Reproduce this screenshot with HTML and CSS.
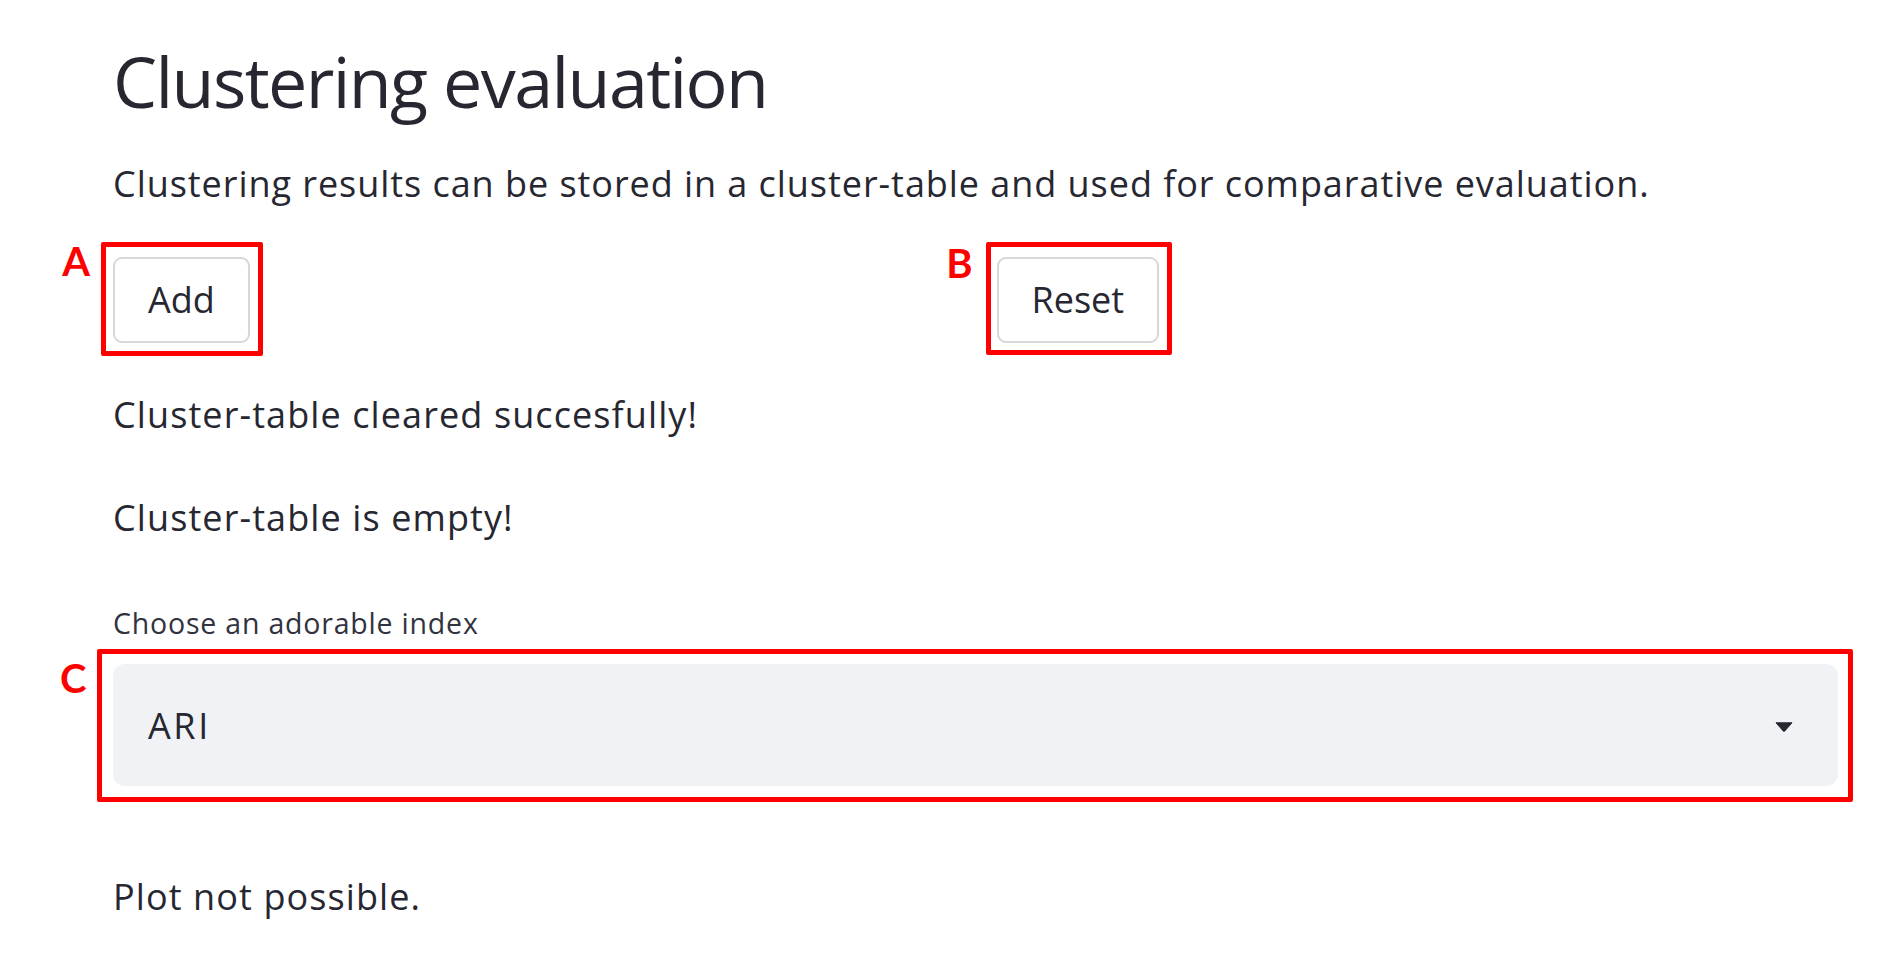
FILE: index.html
```html
<!DOCTYPE html>
<html lang="en">
<head>
<meta charset="utf-8">
<title>Clustering evaluation</title>
<link rel="stylesheet" href="styles.css">
</head>
<body>
<main class="page">
  <h1 class="title">Clustering evaluation</h1>
  <p class="text lead">Clustering results can be stored in a cluster-table and used for comparative evaluation.</p>

  <div class="cols">
    <div class="col">
      <div class="annot">
        <button class="btn" type="button">Add</button>
        <span class="mark mark-a"><span class="tag tag-a">A</span></span>
      </div>
    </div>
    <div class="col">
      <div class="annot">
        <button class="btn" type="button">Reset</button>
        <span class="mark mark-b"><span class="tag tag-b">B</span></span>
      </div>
    </div>
  </div>

  <p class="text msg msg-first">Cluster-table cleared succesfully!</p>
  <p class="text msg msg-second">Cluster-table is empty!</p>

  <label class="label">Choose an adorable index</label>
  <div class="annot annot-block">
    <div class="select">
      <span class="select-value">ARI</span>
      <svg class="select-arrow" width="18" height="10" viewBox="0 0 18 10" aria-hidden="true">
        <path d="M1 0.8 H17 L9.6 9.2 Q9 9.8 8.4 9.2 Z" fill="#262730" stroke="#262730" stroke-width="1" stroke-linejoin="round"/>
      </svg>
    </div>
    <span class="mark mark-c"><span class="tag tag-c">C</span></span>
  </div>

  <p class="text plot">Plot not possible.</p>
</main>
</body>
</html>
```

FILE: styles.css
```css
html, body {
  margin: 0;
  padding: 0;
  background: #ffffff;
}

body {
  font-family: "Open Sans", "Noto Sans", "Liberation Sans", sans-serif;
  color: #262730;
}

.page {
  width: 1725px;
  padding: 0 60px 0 113px;
  display: flex;
  flex-direction: column;
  align-items: flex-start;
}

.title {
  margin: 39px 0 0 0;
  font-size: 70px;
  line-height: 84px;
  font-weight: 400;
  letter-spacing: -1.6px;
}

.text {
  margin: 0;
  font-size: 36px;
  line-height: 57.6px;
  font-weight: 400;
  letter-spacing: 1.1px;
}

.lead {
  margin-top: 32px;
  letter-spacing: 0.95px;
}

.cols {
  margin-top: 44px;
  width: 100%;
  display: grid;
  grid-template-columns: 1fr 1fr;
  column-gap: 42px;
}

.col {
  display: flex;
  align-items: flex-start;
}

.annot {
  position: relative;
  display: flex;
}

.annot-block {
  width: 100%;
}

.btn {
  height: 86px;
  padding: 0 33px;
  border: 2px solid #d6d7da;
  border-radius: 9px;
  background: #ffffff;
  color: #262730;
  font-family: inherit;
  font-size: 36px;
  line-height: 1;
  display: flex;
  align-items: center;
}

.msg-first {
  margin-top: 43px;
}

.msg-second {
  margin-top: 46px;
}

.label {
  margin-top: 54px;
  font-size: 28.5px;
  line-height: 45.6px;
  letter-spacing: 0.8px;
  color: #31333f;
}

.select {
  margin-top: 18px;
  width: 100%;
  height: 122px;
  box-sizing: border-box;
  padding: 0 45px 0 35px;
  border-radius: 12px;
  background: #f0f2f6;
  display: flex;
  align-items: center;
  justify-content: space-between;
}

.select-value {
  font-size: 36px;
  line-height: 1;
  padding-top: 2px;
  letter-spacing: 2.6px;
}

.select-arrow {
  display: block;
  margin-top: 4px;
}

.plot {
  margin-top: 82px;
}

/* annotation overlays */
.mark {
  position: absolute;
  border: 5px solid #ff0000;
  border-radius: 2px;
  pointer-events: none;
}

.mark-a {
  top: -15px;
  left: -12px;
  right: -13px;
  bottom: -13px;
}

.mark-b {
  top: -15px;
  left: -11px;
  right: -13px;
  bottom: -12px;
}

.mark-c {
  top: 3px;
  left: -16.5px;
  right: -15px;
  bottom: -16px;
}

.tag {
  position: absolute;
  font-family: Lato, "Liberation Sans", sans-serif;
  font-weight: 700;
  font-size: 40px;
  line-height: 40px;
  color: #ff0000;
}

.tag-a {
  top: -6px;
  right: calc(100% + 16px);
}

.tag-b {
  top: -4px;
  right: calc(100% + 18px);
}

.tag-c {
  top: 4px;
  right: calc(100% + 15px);
}
```
